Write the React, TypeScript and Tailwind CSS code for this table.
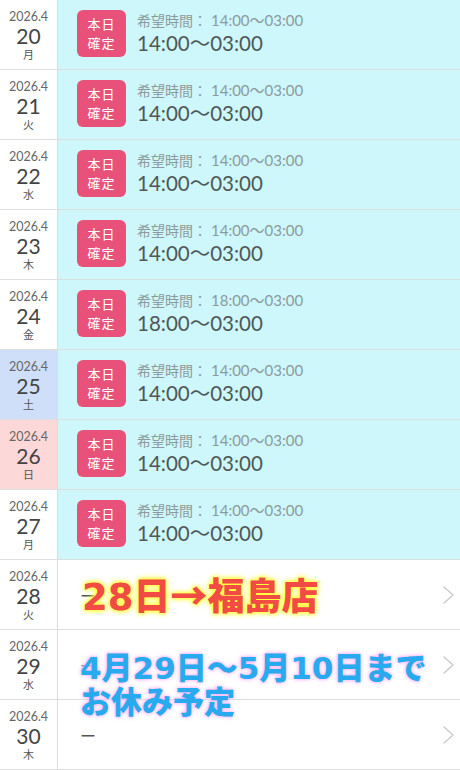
type Day = {
  date: number;
  wd: string;
  tone?: "sat" | "sun";
  time?: string;
};

const days: Day[] = [
  { date: 20, wd: "月", time: "14:00〜03:00" },
  { date: 21, wd: "火", time: "14:00〜03:00" },
  { date: 22, wd: "水", time: "14:00〜03:00" },
  { date: 23, wd: "木", time: "14:00〜03:00" },
  { date: 24, wd: "金", time: "18:00〜03:00" },
  { date: 25, wd: "土", tone: "sat", time: "14:00〜03:00" },
  { date: 26, wd: "日", tone: "sun", time: "14:00〜03:00" },
  { date: 27, wd: "月", time: "14:00〜03:00" },
  { date: 28, wd: "火" },
  { date: 29, wd: "水" },
  { date: 30, wd: "木" },
];

const num = '[font-family:Lato,"Noto_Sans_CJK_JP",sans-serif]';

function Chevron() {
  return (
    <svg width="13" height="20" viewBox="0 0 13 20" className="shrink-0">
      <polyline points="1.5,1.5 11,10 1.5,18.5" fill="none" stroke="#cbcbcb" strokeWidth="1.4" />
    </svg>
  );
}

function DateCell({ d }: { d: Day }) {
  const bg =
    d.tone === "sat" ? "bg-[#cfdffa]" : d.tone === "sun" ? "bg-[#fcd8d8]" : "bg-white";
  return (
    <div
      className={`w-[58px] shrink-0 border-r border-[#dcdcdc] flex flex-col items-center justify-center ${bg}`}
    >
      <span className={`${num} text-[12.5px] leading-[15px] text-[#666]`}>2026.4</span>
      <span className={`${num} text-[21px] leading-[23px] text-[#444]`}>{d.date}</span>
      <span className="text-[11px] leading-[14px] text-[#555]">{d.wd}</span>
    </div>
  );
}

function Row({ d }: { d: Day }) {
  return (
    <div className="flex h-[70px] border-b border-[#dedede]">
      <DateCell d={d} />
      {d.time ? (
        <div className="flex-1 bg-[#cdf7fb] flex items-center pl-[19px] pb-[3px]">
          <div className="w-[49px] h-[47px] rounded-[6px] bg-[#e8517a] flex flex-col items-center justify-center text-white text-[13px] leading-[19px] tracking-[1px]">
            <span>本日</span>
            <span>確定</span>
          </div>
          <div className="ml-[11px] flex flex-col">
            <span className="text-[14px] leading-[20px] text-[#8d9a9b]">
              希望時間：
              <span className={`${num} ml-[4px] text-[15px]`}>{d.time}</span>
            </span>
            <span className={`${num} text-[20.5px] leading-[26px] text-[#4f5757]`}>{d.time}</span>
          </div>
        </div>
      ) : (
        <div className="flex-1 bg-white flex items-center pl-[22px] pr-[5px]">
          <span className="flex-1 text-[16px] text-[#555]">ー</span>
          <Chevron />
        </div>
      )}
    </div>
  );
}

export default function App() {
  return (
    <div
      className="relative w-[460px] h-[770px] overflow-hidden bg-white"
      style={{ fontFamily: '"Noto Sans CJK JP", "Noto Sans", sans-serif' }}
    >
      <div className="flex flex-col">
        {days.map((d) => (
          <Row key={d.date} d={d} />
        ))}
      </div>

      <div className="absolute left-[82px] top-[572px] text-[37px] leading-[44px] font-black text-[#f24a45] [font-family:'DejaVu_Sans','Noto_Sans_CJK_JP',sans-serif] [text-shadow:0_0_3px_#ffff3a,0_0_5px_#ffff3a,0_0_6px_#ffff3a]">
        28日<span className="[font-family:'Noto_Sans_CJK_JP',sans-serif]">→</span>福島店
      </div>
      <div className="absolute left-[80px] top-[651px] text-[31px] leading-[34px] font-black text-[#27aaee] [font-family:'DejaVu_Sans','Noto_Sans_CJK_JP',sans-serif] [text-shadow:0_0_3px_#f8b8f8,0_0_5px_#f8b8f8]">
        <div>4月29日〜5月10日まで</div>
        <div>お休み予定</div>
      </div>
    </div>
  );
}
